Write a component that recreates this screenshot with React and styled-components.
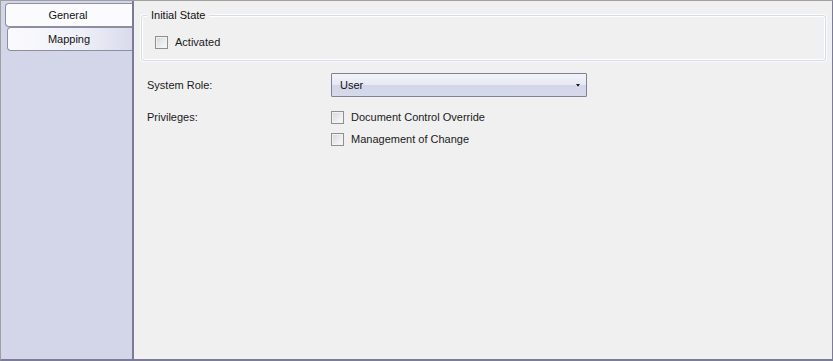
import React from 'react'
import styled, { createGlobalStyle } from 'styled-components'

const GlobalStyle = createGlobalStyle`
html, body {
  margin: 0;
  padding: 0;
  background: #f0f0f0;
}
body {
  font-family: "Liberation Sans", Arial, sans-serif;
  font-size: 11px;
  color: #1a1a1a;
}
`

const Frame = styled.div`
display: flex;
width: 833px;
height: 361px;
box-sizing: border-box;
border-top: 1px solid #a0a0a0;
border-left: 1px solid #a0a0a0;
border-right: 1px solid #7c7c98;
border-bottom: 2px solid #7c7c98;
`

const Sidebar = styled.nav`
width: 131px;
flex-shrink: 0;
background-color: #d3d5e8;
border-right: 2px solid #7b7b97;
padding-top: 2px;
display: flex;
flex-direction: column;
`

const Tab = styled.div`
height: 24px;
box-sizing: border-box;
margin-left: ${props => props.active ? '4px' : '6px'};
border: 1px solid #8e8ea2;
border-right: none;
border-radius: 4px 0 0 4px;
background: ${props => props.active
  ? '#fbfbfe'
  : 'linear-gradient(to right, #fbfbfe 0%, #eeeff7 60%, #d9dbec 100%)'};
display: flex;
align-items: center;
justify-content: center;
padding-right: 2px;
color: #111;
cursor: pointer;
`

const Main = styled.main`
flex: 1;
background-color: #f0f0f0;
padding: 8px 6px 0 7px;
`

const Group = styled.fieldset`
margin: 0;
padding: 14px 0 11px 13px;
border: 1px solid #d4dde6;
border-radius: 3px;
box-shadow: inset 0 0 0 1px #ffffff, 0 0 0 1px #fbfbfb;
`

const Legend = styled.legend`
margin-left: -8px;
padding: 0 4px;
line-height: 13px;
background: #f0f0f0;
color: #111;
`

const CheckRow = styled.label`
display: flex;
align-items: center;
gap: 7px;
height: 13px;
line-height: 13px;
cursor: pointer;
`

const Box = styled.span`
width: 13px;
height: 13px;
box-sizing: border-box;
border: 1px solid #8f8f8f;
background: linear-gradient(135deg, #d6d6da 0%, #ececef 55%, #fafafa 100%);
box-shadow: inset 0 0 0 1px #f2f2f2;
flex-shrink: 0;
`

const Form = styled.div`
display: grid;
grid-template-columns: 184px 256px;
row-gap: 14px;
margin-top: 12px;
padding-left: 6px;
`

const Label = styled.div`
display: flex;
align-items: ${props => props.top ? 'flex-start' : 'center'};
line-height: 13px;
`

const Select = styled.div`
position: relative;
height: 24px;
box-sizing: border-box;
border: 1px solid #7e8296;
border-radius: 1px;
background: linear-gradient(to bottom, #f3f4fa 0%, #e6e8f3 48%, #d3d6e8 52%, #d6d9ea 100%);
display: flex;
align-items: center;
padding-left: 8px;
color: #111;
cursor: pointer;
`

const Arrow = styled.span`
position: absolute;
right: 6px;
top: 10px;
width: 0;
height: 0;
border-left: 2.5px solid transparent;
border-right: 2.5px solid transparent;
border-top: 3px solid #1a1a2a;
filter: drop-shadow(0 1px 0 #ffffff);
`

const Checks = styled.div`
display: flex;
flex-direction: column;
gap: 9px;
`

const Checkbox = ({ label }) => (
  <CheckRow>
    <Box />
    <span>{label}</span>
  </CheckRow>
)

const App = () => {
  return (
    <>
      <GlobalStyle />
      <Frame>
        <Sidebar>
          <Tab active>General</Tab>
          <Tab>Mapping</Tab>
        </Sidebar>
        <Main>
          <Group>
            <Legend>Initial State</Legend>
            <Checkbox label="Activated" />
          </Group>
          <Form>
            <Label>System Role:</Label>
            <Select>
              User
              <Arrow />
            </Select>
            <Label top>Privileges:</Label>
            <Checks>
              <Checkbox label="Document Control Override" />
              <Checkbox label="Management of Change" />
            </Checks>
          </Form>
        </Main>
      </Frame>
    </>
  )
}

export default App
